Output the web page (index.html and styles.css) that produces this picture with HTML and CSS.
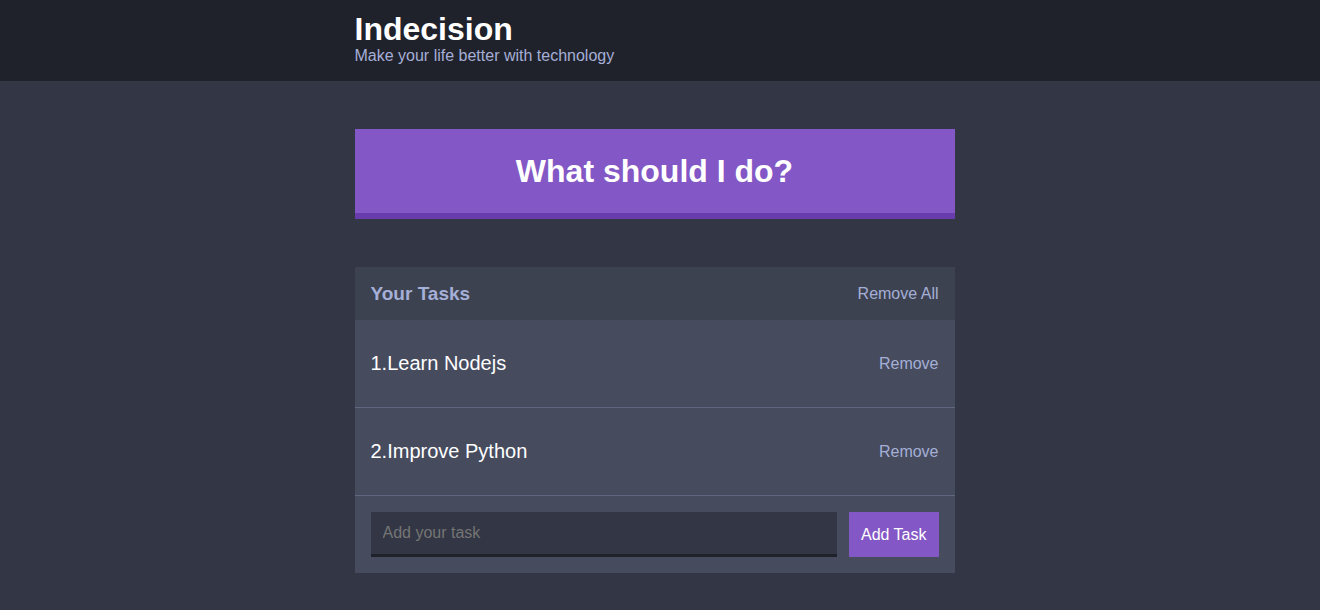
FILE: index.html
```html
<!DOCTYPE html>
<html lang="en">
<head>
<meta charset="utf-8">
<meta name="viewport" content="width=device-width, initial-scale=1">
<title>Indecision</title>
<link rel="stylesheet" href="styles.css">
</head>
<body>
<header class="header">
  <div class="container">
    <h1 class="header__title">Indecision</h1>
    <h2 class="header__subtitle">Make your life better with technology</h2>
  </div>
</header>
<main class="content">
  <div class="container">
    <button class="big-button" type="button">What should I do?</button>
    <section class="widget">
      <div class="widget__header">
        <h3 class="widget__title">Your Tasks</h3>
        <button class="button--link" type="button">Remove All</button>
      </div>
      <div class="task">
        <p class="task__text">1.Learn Nodejs</p>
        <button class="button--link" type="button">Remove</button>
      </div>
      <div class="task">
        <p class="task__text">2.Improve Python</p>
        <button class="button--link" type="button">Remove</button>
      </div>
      <form class="add-task">
        <input class="add-task__input" type="text" name="task" placeholder="Add your task" aria-label="Add your task">
        <button class="button" type="button">Add Task</button>
      </form>
    </section>
  </div>
</main>
</body>
</html>
```

FILE: styles.css
```css
* {
  box-sizing: border-box;
}

body {
  margin: 0;
  background: #333644;
  color: #fff;
  font-family: "Liberation Sans", Arial, Helvetica, sans-serif;
  font-size: 16px;
}

h1, h2, h3, p {
  margin: 0;
}

button, input {
  font-family: inherit;
  font-size: 16px;
}

button {
  cursor: pointer;
}

.container {
  max-width: 600px;
  margin: 0 auto;
}

.header {
  margin-bottom: 48px;
  padding: 11px 11px 16px 0;
  background: #20222b;
}

.content {
  padding-right: 11px;
}

.header__title {
  font-size: 32px;
  line-height: 36px;
}

.header__subtitle {
  color: #a5afd7;
  font-size: 16px;
  font-weight: 400;
  line-height: 18px;
}

.big-button {
  display: block;
  width: 100%;
  margin-bottom: 48px;
  padding: 24px;
  border: 0;
  border-bottom: 6px solid #693cad;
  background: #8357c5;
  color: #fff;
  font-size: 32px;
  font-weight: 700;
  line-height: 36px;
}

.widget {
  background: #464b5e;
}

.widget__header {
  display: flex;
  align-items: center;
  justify-content: space-between;
  padding: 16px;
  background: #3d4251;
  color: #a5afd7;
}

.widget__title {
  font-size: 19px;
  line-height: 21px;
}

.button--link {
  padding: 0;
  border: 0;
  background: none;
  color: #a5afd7;
  line-height: 18px;
}

.task {
  display: flex;
  align-items: center;
  justify-content: space-between;
  padding: 32px 16px;
  border-bottom: 1px solid #5f6680;
}

.task__text {
  font-size: 20px;
  line-height: 23px;
}

.add-task {
  display: flex;
  gap: 12px;
  padding: 16px;
}

.add-task__input {
  flex: 1;
  min-width: 0;
  padding: 12px;
  border: 0;
  border-bottom: 3px solid #20222b;
  border-radius: 0;
  background: #333644;
  color: #a5afd7;
  line-height: 18px;
}

.add-task__input::placeholder {
  color: #757575;
}

.button {
  padding: 12px;
  border: 0;
  background: #8357c5;
  color: #fff;
  font-weight: 500;
}
```
